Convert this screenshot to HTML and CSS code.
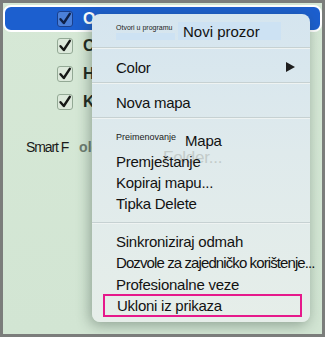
FILE: index.html
```html
<!DOCTYPE html>
<html>
<head>
  <title>Folder menu</title>
  <meta name="viewport" content="width=device-width, initial-scale=1">
  <link rel="stylesheet" href="styles.css">
</head>
<body>
  <div class="window">
    <!-- folder list -->
    <div class="row selected">
      <span class="check"><svg width="16" height="16" viewBox="0 0 16 16"><path d="M3.5 8.2 L6.8 12 L12.8 2.8" /></svg></span>
      <span class="label">O</span>
    </div>
    <div class="row">
      <span class="check"><svg width="16" height="16" viewBox="0 0 16 16"><path d="M3.5 8.2 L6.8 12 L12.8 2.8" /></svg></span>
      <span class="label">C</span>
    </div>
    <div class="row">
      <span class="check"><svg width="16" height="16" viewBox="0 0 16 16"><path d="M3.5 8.2 L6.8 12 L12.8 2.8" /></svg></span>
      <span class="label">H</span>
    </div>
    <div class="row">
      <span class="check"><svg width="16" height="16" viewBox="0 0 16 16"><path d="M3.5 8.2 L6.8 12 L12.8 2.8" /></svg></span>
      <span class="label">K</span>
    </div>
    <div class="smart">Smart F<span class="smart-rest">old</span></div>

    <!-- context menu -->
    <div class="menu">
      <div class="item open-item">
        <div class="open-side">
          <span class="tiny">Otvori u programu</span>
          <span class="open-box"></span>
        </div>
        <span class="open-main">Novi prozor</span>
      </div>
      <div class="sep"></div>
      <div class="item submenu">Color<span class="arrow"></span></div>
      <div class="sep"></div>
      <div class="item">Nova mapa</div>
      <div class="sep"></div>
      <div class="group">
        <div class="item rename"><span class="tiny-rename">Preimenovanje</span><span>Mapa</span></div>
        <div class="item ghosted"><span class="ghost">Folder...</span><span class="over">Premještanje</span></div>
        <div class="item">Kopiraj mapu...</div>
        <div class="item">Tipka Delete</div>
      </div>
      <div class="sep"></div>
      <div class="group last">
        <div class="item">Sinkroniziraj odmah</div>
        <div class="item tight">Dozvole za zajedničko korištenje...</div>
        <div class="item pro">Profesionalne veze</div>
        <div class="item marked">Ukloni iz prikaza</div>
      </div>
    </div>
  </div>
</body>
</html>
```

FILE: styles.css
```css
/* Page */
body {
  margin: 0;
  font-family: "Liberation Sans", Arial, sans-serif;
}

.window {
  position: relative;
  width: 325px;
  height: 337px;
  box-sizing: border-box;
  border: 3px solid #7b7d7b;
  background: linear-gradient(180deg, #d6e8d6, #d2e5d3);
  overflow: hidden;
}

/* Folder list rows */
.row {
  display: flex;
  align-items: center;
  height: 28px;
  padding-left: 54px;
}

.row.selected {
  height: 27px;
  box-sizing: border-box;
  margin-top: 2px;
  padding-left: 52px;
  border: 2px solid #ffffff;
  border-radius: 8px;
  background-color: #1c5fcf;
}

.check {
  width: 16px;
  height: 16px;
  box-sizing: border-box;
  border: 1px solid #93a995;
  border-radius: 3px;
  background-color: #dce9db;
  margin-right: 10px;
  display: flex;
}

.check svg {
  margin: -1px;
}

.check path {
  fill: none;
  stroke: #161816;
  stroke-width: 2.4;
  stroke-linecap: round;
  stroke-linejoin: round;
}

.selected .check {
  background-color: #4b80d9;
  border-color: #1a3f8c;
}

.selected .check path {
  stroke: #0f2148;
}

.label {
  font-size: 16px;
  font-weight: bold;
  color: #1e2820;
}

.selected .label {
  color: #ffffff;
}

.smart {
  margin-top: 23px;
  padding-left: 23px;
  font-size: 14px;
  line-height: 16px;
  letter-spacing: -1.1px;
  color: #1a1a1a;
}

.smart-rest {
  margin-left: 11px;
  font-weight: bold;
  letter-spacing: 0;
  color: #6d7b70;
}

/* Context menu */
.menu {
  position: absolute;
  left: 89px;
  top: 11px;
  width: 218px;
  padding: 8px 0 5px;
  border-radius: 8px;
  background: linear-gradient(180deg, #d5e5ef 0%, #dfeaec 45%, #e6eee9 100%);
  box-shadow: -2px 3px 14px rgba(40, 60, 50, 0.4);
}

.item {
  position: relative;
  height: 21px;
  padding-left: 24px;
  font-size: 15px;
  line-height: 21px;
  letter-spacing: -0.25px;
  color: #121212;
  white-space: nowrap;
}

.sep {
  height: 1px;
  border-top: 1px solid #c6d1d2;
  background-color: #eef3f2;
}

.open-item {
  display: flex;
  height: 18px;
  margin-bottom: 7px;
  letter-spacing: 0;
}

.open-side {
  display: flex;
  flex-direction: column;
  width: 59px;
}

.tiny {
  font-size: 7px;
  line-height: 10px;
  margin-top: 1px;
  color: #1a1a1a;
}

.open-box {
  height: 8px;
  background-color: #cde2f3;
}

.open-main {
  margin-left: 3px;
  width: 98px;
  padding-left: 5px;
  padding-top: 1px;
  line-height: 17px;
  background-color: #cde2f3;
}

.submenu {
  display: flex;
  align-items: center;
  margin: 8px 0 4px;
}

.arrow {
  margin-left: auto;
  margin-right: 15px;
  margin-top: -2px;
  border-left: 9px solid #1e1e1e;
  border-top: 5px solid transparent;
  border-bottom: 5px solid transparent;
}

.submenu + .sep + .item {
  margin: 8px 0 4px;
}

.group {
  margin: 11px 0 8px;
}

.group.last {
  margin: 7px 0 0;
}

.rename {
  display: flex;
  align-items: flex-start;
}

.tiny-rename {
  font-size: 9px;
  line-height: 12px;
  margin-top: 1px;
  margin-right: 9px;
  letter-spacing: 0;
  color: #1a1a1a;
}

.ghost {
  position: absolute;
  left: 71px;
  top: -4px;
  font-size: 17px;
  color: #c3cbc9;
}

.over {
  position: relative;
}

.tight {
  height: 22px;
  line-height: 22px;
  letter-spacing: -0.9px;
}

.pro {
  height: 20px;
  line-height: 18px;
  padding-top: 2px;
  box-sizing: border-box;
}

.marked {
  height: 23px;
  box-sizing: border-box;
  margin: 0 8px 0 11px;
  padding-left: 12px;
  padding-top: 1px;
  line-height: 18px;
  border: 2px solid #e6198b;
}
```
